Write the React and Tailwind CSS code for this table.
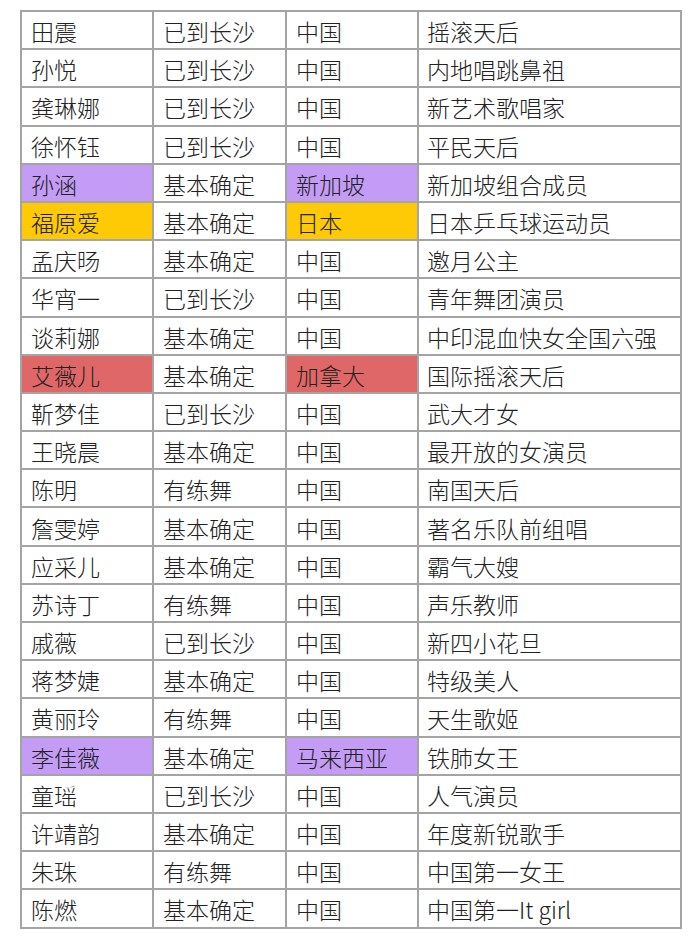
const rows = [
  ['田震', '已到长沙', '中国', '摇滚天后'],
  ['孙悦', '已到长沙', '中国', '内地唱跳鼻祖'],
  ['龚琳娜', '已到长沙', '中国', '新艺术歌唱家'],
  ['徐怀钰', '已到长沙', '中国', '平民天后'],
  ['孙涵', '基本确定', '新加坡', '新加坡组合成员', 'purple'],
  ['福原爱', '基本确定', '日本', '日本乒乓球运动员', 'gold'],
  ['孟庆旸', '基本确定', '中国', '邀月公主'],
  ['华宵一', '已到长沙', '中国', '青年舞团演员'],
  ['谈莉娜', '基本确定', '中国', '中印混血快女全国六强'],
  ['艾薇儿', '基本确定', '加拿大', '国际摇滚天后', 'red'],
  ['靳梦佳', '已到长沙', '中国', '武大才女'],
  ['王晓晨', '基本确定', '中国', '最开放的女演员'],
  ['陈明', '有练舞', '中国', '南国天后'],
  ['詹雯婷', '基本确定', '中国', '著名乐队前组唱'],
  ['应采儿', '基本确定', '中国', '霸气大嫂'],
  ['苏诗丁', '有练舞', '中国', '声乐教师'],
  ['戚薇', '已到长沙', '中国', '新四小花旦'],
  ['蒋梦婕', '基本确定', '中国', '特级美人'],
  ['黄丽玲', '有练舞', '中国', '天生歌姬'],
  ['李佳薇', '基本确定', '马来西亚', '铁肺女王', 'purple'],
  ['童瑶', '已到长沙', '中国', '人气演员'],
  ['许靖韵', '基本确定', '中国', '年度新锐歌手'],
  ['朱珠', '有练舞', '中国', '中国第一女王'],
  ['陈燃', '基本确定', '中国', '中国第一It girl'],
];

const fills = {
  purple: 'bg-[#c49cf6]',
  gold: 'bg-[#fec905]',
  red: 'bg-[#e06767]',
};

function App() {
  return (
    <div className="w-[690px] h-[938px] bg-white pt-[10px] pl-[20px]" style={{ fontFamily: '"Noto Sans CJK SC", "Liberation Sans", sans-serif' }}>
      <table className="table-fixed border-collapse w-[660px] text-[23px] font-light text-[#222222]">
        <colgroup>
          <col className="w-[132px]" />
          <col className="w-[133px]" />
          <col className="w-[132px]" />
          <col className="w-[263px]" />
        </colgroup>
        <tbody>
          {rows.map((row, i) => {
            const fill = row[4] ? fills[row[4]] : '';
            return (
              <tr key={i} className="h-[38.2px]">
                <td className={`border-2 border-[#a4a4a4] pl-[9px] pt-[3px] leading-none whitespace-nowrap ${fill}`}>{row[0]}</td>
                <td className="border-2 border-[#a4a4a4] pl-[9px] pt-[3px] leading-none whitespace-nowrap">{row[1]}</td>
                <td className={`border-2 border-[#a4a4a4] pl-[9px] pt-[3px] leading-none whitespace-nowrap ${fill}`}>{row[2]}</td>
                <td className="border-2 border-[#a4a4a4] pl-[8px] pt-[3px] leading-none whitespace-nowrap">{row[3]}</td>
              </tr>
            );
          })}
        </tbody>
      </table>
    </div>
  );
}

export default App;
